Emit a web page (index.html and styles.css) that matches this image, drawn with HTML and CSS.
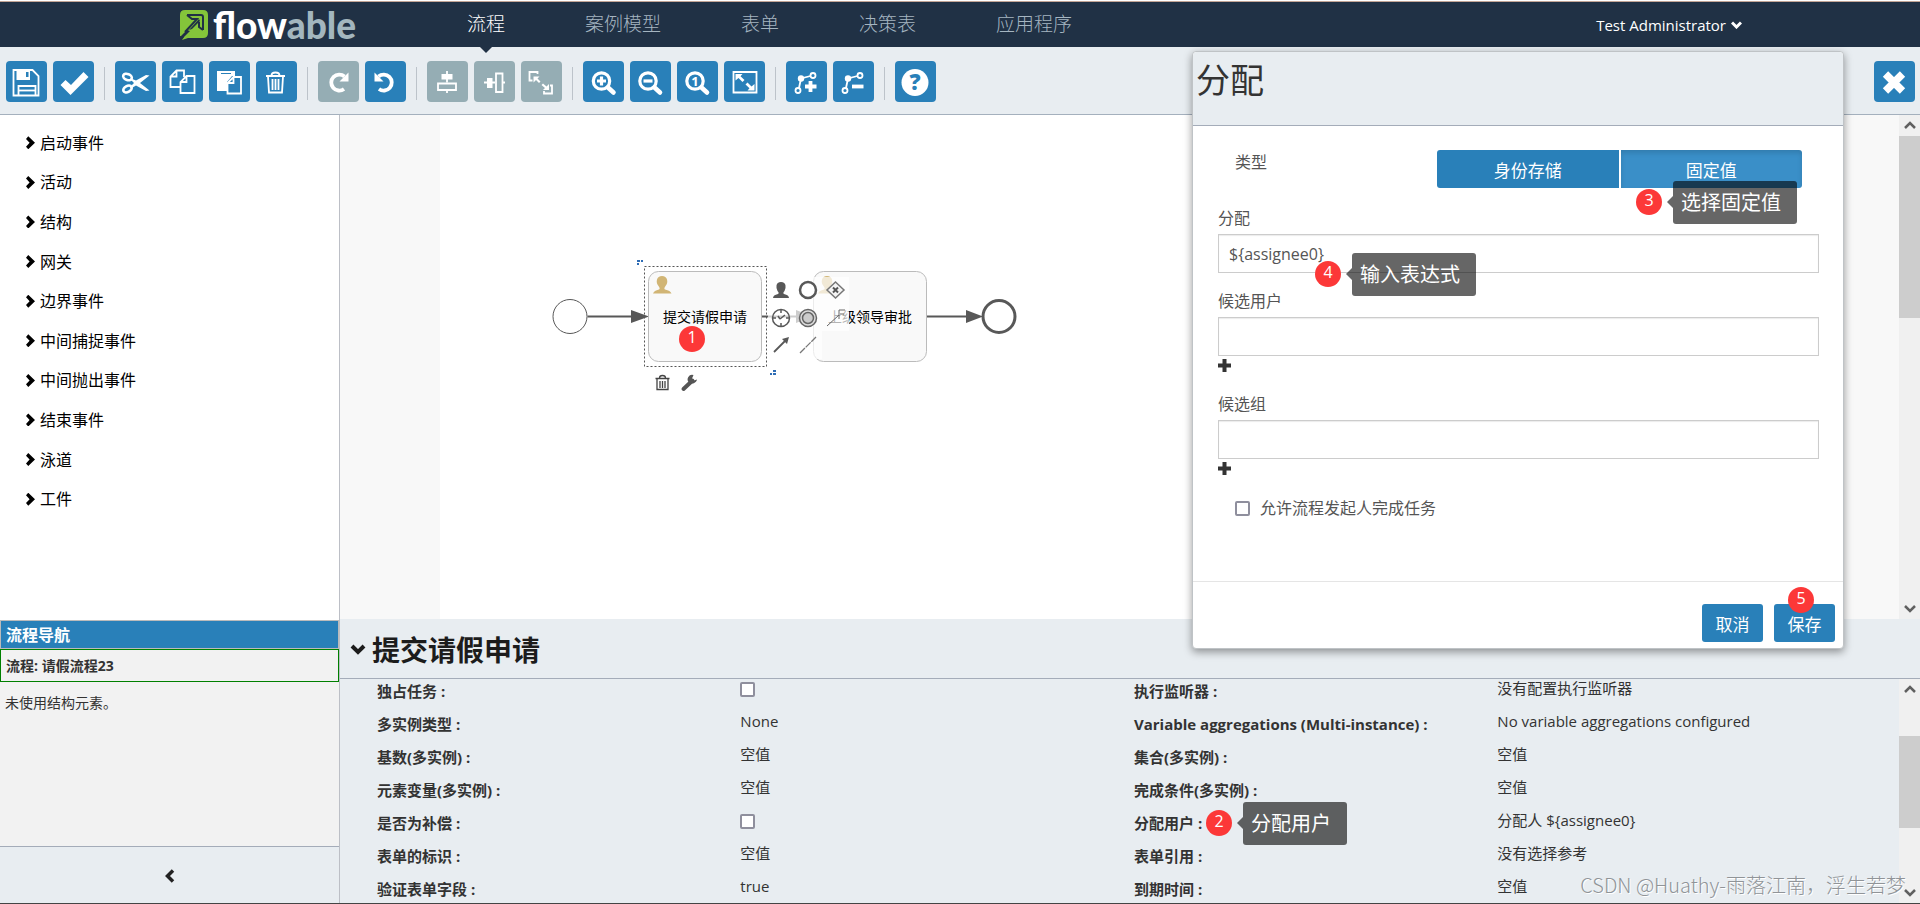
FILE: index.html
```html
<!DOCTYPE html>
<html lang="zh-CN">
<head>
<meta charset="utf-8">
<title>Flowable Modeler</title>
<link rel="stylesheet" href="styles.css">
</head>
<body>
<header class="navbar">
  <a class="logo" href="#" aria-label="flowable">
    <svg class="logo-mark" viewBox="0 0 29 30">
      <path d="M5 0h18q5 0 5 5v18q0 5-5 5H8L2 30l2-3L0 26V5q0-5 5-5z" fill="#84c53a"/>
      <path d="M7 5h14q2 0 2 2v13M7 5l5 4h5L5 22M23 20l-4-3v-5" fill="none" stroke="#203145" stroke-width="2"/>
      <path d="M19 9L9 20l3-1 8-8z" fill="#203145"/>
      <path d="M0 27L7 20l3 1-7 7z" fill="#203145"/>
    </svg>
    <span class="logo-text">flow<span class="logo-dim">able</span></span>
  </a>
  <nav class="menu">
    <a class="menu-item active" href="#">流程</a>
    <a class="menu-item" href="#">案例模型</a>
    <a class="menu-item" href="#">表单</a>
    <a class="menu-item" href="#">决策表</a>
    <a class="menu-item" href="#">应用程序</a>
  </nav>
  <button class="user" type="button">Test Administrator
    <svg width="11" height="8" viewBox="0 0 11 8"><path d="M1 1.500l4.500 4.500 4.500-4.500" fill="none" stroke="#fff" stroke-width="3"/></svg>
  </button>
</header>

<div class="toolbar">
  <button class="tool" type="button" aria-label="保存"><svg viewBox="0 0 41 41"><path d="M7.500 9h19l6 6v19.500h-25z" class="s"/><path d="M10.500 9h13.500v10h-13.500z" class="f"/><path d="M20 11h2.500v5h-2.500z" class="b"/><path d="M12.500 34v-9h17v9" class="s"/><path d="M13 29.500h16" class="s"/></svg></button>
  <button class="tool" type="button" aria-label="验证"><svg viewBox="0 0 41 41"><path d="M7.500 24l5-5 5.500 5L30.500 11l5 5L17.500 34z" class="f"/></svg></button>
  <span class="sep"></span>
  <button class="tool" type="button" aria-label="剪切"><svg viewBox="0 0 41 41"><ellipse cx="12.500" cy="16" rx="4.500" ry="3" transform="rotate(22 12.500 16)" class="s2"/><ellipse cx="12.500" cy="28" rx="4.500" ry="3" transform="rotate(-28 12.500 28)" class="s2"/><path d="M16 17.500l5 2L31 14l3.500.5-9.500 7.500 9.500 7.500-3.500.5-10-5.500-5 3-1-1.500 4-4-4-4z" class="f"/></svg></button>
  <button class="tool" type="button" aria-label="复制"><svg viewBox="0 0 41 41"><path d="M18 26H8.500V15.500l6-6H22V16M14.500 9.500v6h-6" class="s"/><path d="M24.500 15H32.500v17H18.500V21zM24.500 15v6h-6" class="s"/></svg></button>
  <button class="tool" type="button" aria-label="粘贴"><svg viewBox="0 0 41 41"><path d="M8 10h18v5h-3l-5 6v9H8z" class="f"/><path d="M12 12.500h10" class="bs"/><path d="M24.500 16H32v16.500H18.500V22zM24.500 16v6h-6" class="s"/></svg></button>
  <button class="tool" type="button" aria-label="删除"><svg viewBox="0 0 41 41"><path d="M10 15h19M15.500 14.500q0-3 4-3t4 3M12 15.500l1 16h13l1-16M16.500 18v11M19.500 18v11M22.500 18v11" class="s"/></svg></button>
  <span class="sep"></span>
  <button class="tool" type="button" aria-label="重做" disabled><svg viewBox="0 0 41 41"><path d="M26.500 15.500A8 8 0 1 0 26 28" class="s4"/><path d="M30.500 11.500v9h-9z" class="f"/></svg></button>
  <button class="tool" type="button" aria-label="撤销"><svg viewBox="0 0 41 41"><path d="M13.500 15.500A8 8 0 1 1 14 28" class="s4"/><path d="M9.500 11.500v9h9z" class="f"/></svg></button>
  <span class="sep"></span>
  <button class="tool" type="button" aria-label="垂直对齐" disabled><svg viewBox="0 0 41 41"><path d="M20 10v11.500M20 29v3" class="s"/><path d="M14.500 13h11v5.500h-11z" class="f"/><path d="M11 22.500h18v6.500H11z" class="s"/></svg></button>
  <button class="tool" type="button" aria-label="水平对齐" disabled><svg viewBox="0 0 41 41"><path d="M10 21.500h11M29 21.500h2" class="s"/><path d="M13 17h5.500v10h-5.500z" class="f"/><path d="M22 12.500h6.500v18.500H22z" class="s"/></svg></button>
  <button class="tool" type="button" aria-label="相同大小" disabled><svg viewBox="0 0 41 41"><path d="M16.500 13v-2H8.500v8.500h3M31 26v6.500h-8V30M29 24.500h2v3" class="s"/><path d="M12.500 15.500h6l-2 2 3 3-1.500 1.500-3-3-2.500 2.500z" class="f"/><path d="M28 29h-6l2-2-3.500-3 1.500-1.500 3.500 3 2.500-2.500z" class="f"/></svg></button>
  <span class="sep"></span>
  <button class="tool" type="button" aria-label="放大"><svg viewBox="0 0 41 41"><circle cx="18.500" cy="20" r="8.200" class="s3"/><path d="M25 26.500l5.500 5" class="s5"/><path d="M18.500 15.500v9M14 20h9" class="s3"/></svg></button>
  <button class="tool" type="button" aria-label="缩小"><svg viewBox="0 0 41 41"><circle cx="18" cy="20" r="8.200" class="s3"/><path d="M24.500 26.500l5.500 5" class="s5"/><path d="M13.500 20h9" class="s3"/></svg></button>
  <button class="tool" type="button" aria-label="实际大小"><svg viewBox="0 0 41 41"><circle cx="18" cy="20" r="8.200" class="s3"/><path d="M24.500 26.500l5.500 5" class="s5"/><text x="18" y="25" class="one">1</text></svg></button>
  <button class="tool" type="button" aria-label="适合窗口"><svg viewBox="0 0 41 41"><path d="M9.500 11h23v20.500h-23z" class="s"/><path d="M11.500 13h7l-2 2.300 4 3.700-2 2-4-4-3 2.500zM30.500 29.500h-7l2-2.300-4-3.700 2-2 4 4 3-2.500z" class="f"/></svg></button>
  <span class="sep"></span>
  <button class="tool" type="button" aria-label="添加折点"><svg viewBox="0 0 41 41"><circle cx="12" cy="29.500" r="2.500" class="s"/><circle cx="15" cy="17.500" r="3.200" class="f"/><circle cx="27" cy="14.500" r="2.500" class="s"/><path d="M13 27l2-9.500 9.500-2.500" class="s"/><path d="M24.500 20v11M19 25.500h11.500" class="s4"/></svg></button>
  <button class="tool" type="button" aria-label="删除折点"><svg viewBox="0 0 41 41"><circle cx="12" cy="29.500" r="2.500" class="s"/><circle cx="15" cy="17.500" r="3.200" class="f"/><circle cx="27" cy="14.500" r="2.500" class="s"/><path d="M13 27l2-9.500 9.500-2.500" class="s"/><path d="M19 25.500h11.500" class="s4"/></svg></button>
  <span class="sep"></span>
  <button class="tool" type="button" aria-label="帮助"><svg viewBox="0 0 41 41"><circle cx="20" cy="21.500" r="13.500" class="f"/><text x="20" y="29" class="ask">?</text></svg></button>
  <button class="tool close" type="button" aria-label="关闭"><svg viewBox="0 0 41 41"><path d="M11.500 13L28.500 30M28.500 13L11.500 30" stroke="#fff" stroke-width="7.500"/></svg></button>
</div>

<main class="main">
  <aside class="side">
    <ul class="palette">
      <li><button type="button">启动事件</button></li>
      <li><button type="button">活动</button></li>
      <li><button type="button">结构</button></li>
      <li><button type="button">网关</button></li>
      <li><button type="button">边界事件</button></li>
      <li><button type="button">中间捕捉事件</button></li>
      <li><button type="button">中间抛出事件</button></li>
      <li><button type="button">结束事件</button></li>
      <li><button type="button">泳道</button></li>
      <li><button type="button">工件</button></li>
    </ul>
    <section class="navigator">
      <h2 class="navigator-head">流程导航</h2>
      <p class="navigator-current">流程: 请假流程23</p>
      <p class="navigator-note">未使用结构元素。</p>
    </section>
    <button class="collapse" type="button" aria-label="收起">
      <svg width="10" height="14" viewBox="0 0 10 14"><path d="M8 1.500L2.500 7 8 12.500" fill="none" stroke="#222" stroke-width="3.500"/></svg>
    </button>
  </aside>

  <section class="work">
    <div class="canvas-row">
      <div class="canvas">
        <div class="paper">
          <svg class="diagram" width="500" height="170" viewBox="0 0 500 170">
            <g fill="none" stroke="#585858">
              <circle cx="30" cy="76.500" r="17" fill="#fff" stroke-width="1"/>
              <path d="M47.500 76.500H92M387 76.500h40M222 76.500h35" stroke-width="2"/>
            </g>
            <path d="M91 70l18 6.500-18 6.500zM426 70l17 6.500-17 6.500zM256 70l17 6.500-17 6.500z" fill="#585858"/>
            <circle cx="459" cy="76.500" r="16" fill="#fff" stroke="#585858" stroke-width="3"/>
            <rect x="108.500" y="31.500" width="113" height="90" rx="10" fill="#f9f9f9" stroke="#bbb"/>
            <rect x="273.500" y="31.500" width="113" height="90" rx="10" fill="#f9f9f9" stroke="#bbb"/>
            <rect x="104.500" y="26.500" width="122" height="100" fill="none" stroke="#555" stroke-dasharray="2 2"/>
            <g fill="#d1b575">
              <path d="M113 53.500q1-3 6-4 1.500-1-.5-3.500-2.500-3-1.500-6.500 1-3.500 5-3.500t5 3.500q1 3.500-1.500 6.500-2 2.500-.5 3.500 5.500 1 6.500 4z"/>
              <path d="M278 53.500q1-3 6-4 1.500-1-.5-3.500-2.500-3-1.500-6.500 1-3.500 5-3.500t5 3.500q1 3.500-1.500 6.500-2 2.500-.5 3.500 5.500 1 6.500 4z"/>
            </g>
            <text x="165" y="82" class="task-text">提交请假申请</text>
            <text x="330" y="82" class="task-text">上级领导审批</text>
            <path d="M228 37h81v54h-27v28h-54z" fill="#fff" fill-opacity=".7"/>
            <g fill="#2f6db5"><path d="M97 20h3v2h-3zM101 20h2v2h-2zM97 23h2v2h-2zM233 130h3v2h-3zM230 133h2v2h-2zM233 133h3v2h-3z"/></g>
            <path d="M233 58q0-3 5-4 1.500-1-.5-3-1.500-3-1-5.500.5-3.500 4.500-3.500t4.500 3.500q.5 2.500-1 5.500-2 2-.5 3 5 1 5 4z" fill="#585858"/>
            <circle cx="268" cy="50" r="8" fill="#fff" stroke="#585858" stroke-width="2.500"/>
            <path d="M295.500 42l8.500 8-8.500 8-8.500-8z" fill="#f4f4f4" stroke="#777" stroke-width="1.500"/>
            <path d="M293 47.500l5 5M298 47.500l-5 5" stroke="#555" stroke-width="2"/>
            <circle cx="241" cy="78" r="8.500" fill="none" stroke="#585858" stroke-width="1.500"/>
            <path d="M241 70v3M241 83v3M233 78h3M246 78h3M240 79l5-4M240 79l-2-3" stroke="#585858" stroke-width="1.500"/>
            <circle cx="268" cy="78" r="8.500" fill="#ddd" stroke="#666" stroke-width="1.500"/>
            <circle cx="268" cy="78" r="5.500" fill="#ccc" stroke="#666" stroke-width="1.500"/>
            <path d="M287 86l12-11M299 79v-9h6M300 74h4" fill="none" stroke="#666"/>
            <path d="M234 112l11-11" stroke="#585858" stroke-width="1.800"/>
            <path d="M249 97l-2 7-5-5z" fill="#585858"/>
            <path d="M260 113l16-16" stroke="#777" stroke-width="1.300" stroke-dasharray="7 1"/>
            <path d="M115.500 138.500h14M119.500 138q0-2.500 3-2.500t3 2.500M117 139v10.500h11V139M120 141v7M122.500 141v7M125 141v7" fill="none" stroke="#444" stroke-width="1.300"/>
            <path d="M143.500 149l9-8.500" stroke="#555" stroke-width="4" stroke-linecap="round"/>
            <path d="M157 139.500a5 5 0 0 1-8 3 4.500 4.500 0 0 1 4.500-7.500l-1.500 3.500 2 2z" fill="#555"/>
          </svg>
          <span class="pin pin-1">1</span>
        </div>
      </div>
      <div class="scroll scroll-canvas">
        <svg class="up" width="12" height="9" viewBox="0 0 12 9"><path d="M1 7l5-5 5 5" fill="none" stroke="#606060" stroke-width="2.500"/></svg>
        <span class="thumb"></span>
        <svg class="down" width="12" height="9" viewBox="0 0 12 9"><path d="M1 2l5 5 5-5" fill="none" stroke="#606060" stroke-width="2.500"/></svg>
      </div>
    </div>

    <div class="props">
      <h1 class="props-title">
        <svg width="16" height="12" viewBox="0 0 16 12"><path d="M2 3l6 6 6-6" fill="none" stroke="#1c1c1c" stroke-width="4"/></svg>
        提交请假申请
      </h1>
      <div class="props-body">
        <div class="props-view">
          <table class="props-table">
            <tr><th scope="row"><label for="exclusive">独占任务 :</label></th><td><input class="check" type="checkbox" id="exclusive"></td><th scope="row">执行监听器 :</th><td>没有配置执行监听器</td></tr>
            <tr><th scope="row">多实例类型 :</th><td>None</td><th scope="row">Variable aggregations (Multi-instance) :</th><td>No variable aggregations configured</td></tr>
            <tr><th scope="row">基数(多实例) :</th><td>空值</td><th scope="row">集合(多实例) :</th><td>空值</td></tr>
            <tr><th scope="row">元素变量(多实例) :</th><td>空值</td><th scope="row">完成条件(多实例) :</th><td>空值</td></tr>
            <tr><th scope="row"><label for="compensation">是否为补偿 :</label></th><td><input class="check" type="checkbox" id="compensation"></td><th scope="row" class="pinned">分配用户 :<span class="pin pin-2">2</span><span class="tip tip-2">分配用户</span></th><td>分配人 ${assignee0}</td></tr>
            <tr><th scope="row">表单的标识 :</th><td>空值</td><th scope="row">表单引用 :</th><td>没有选择参考</td></tr>
            <tr><th scope="row">验证表单字段 :</th><td>true</td><th scope="row">到期时间 :</th><td>空值</td></tr>
          </table>
        </div>
        <div class="scroll scroll-props">
          <svg class="up" width="12" height="9" viewBox="0 0 12 9"><path d="M1 7l5-5 5 5" fill="none" stroke="#606060" stroke-width="2.500"/></svg>
          <span class="thumb"></span>
          <svg class="down" width="12" height="9" viewBox="0 0 12 9"><path d="M1 2l5 5 5-5" fill="none" stroke="#606060" stroke-width="2.500"/></svg>
        </div>
      </div>
    </div>
  </section>
</main>

<form class="dialog">
  <h2 class="dialog-title">分配</h2>
  <div class="dialog-body">
    <div class="type-row">
      <span class="type-label">类型</span>
      <div class="segmented">
        <button class="segment" type="button">身份存储</button>
        <button class="segment selected" type="button">固定值</button>
      </div>
      <span class="pin pin-3">3</span><span class="tip tip-3">选择固定值</span>
    </div>
    <div class="field">
      <label for="assignee">分配</label>
      <input class="text" id="assignee" type="text" value="${assignee0}">
      <span class="pin pin-4">4</span><span class="tip tip-4">输入表达式</span>
    </div>
    <div class="field">
      <label for="users">候选用户</label>
      <input class="text" id="users" type="text">
      <button class="plus" type="button" aria-label="添加候选用户"><svg width="13" height="13" viewBox="0 0 13 13"><path d="M6.500 0v13M0 6.500h13" stroke="#333" stroke-width="4"/></svg></button>
    </div>
    <div class="field">
      <label for="groups">候选组</label>
      <input class="text" id="groups" type="text">
      <button class="plus" type="button" aria-label="添加候选组"><svg width="13" height="13" viewBox="0 0 13 13"><path d="M6.500 0v13M0 6.500h13" stroke="#333" stroke-width="4"/></svg></button>
    </div>
    <label class="allow"><input class="check" type="checkbox">允许流程发起人完成任务</label>
  </div>
  <div class="dialog-foot">
    <button class="btn" type="button">取消</button>
    <button class="btn" type="button">保存</button>
    <span class="pin pin-5">5</span>
  </div>
</form>
<span class="watermark">CSDN @Huathy-雨落江南，浮生若梦</span>
</body>
</html>
```

FILE: styles.css
```css
* { box-sizing: border-box; }

body {
  margin: 0;
  height: 100vh;
  display: flex;
  flex-direction: column;
  overflow: hidden;
  position: relative;
  border-bottom: 1px solid #444;
  font-family: "Open Sans", "Noto Sans CJK SC", sans-serif;
  font-size: 15px;
  color: #333;
  background: #e8edf1;
}

button, input { font-family: inherit; margin: 0; }
button { border: 0; padding: 0; background: none; color: inherit; }
h1, h2, p, ul { margin: 0; padding: 0; }

/* top bar */
.navbar {
  flex: none;
  height: 47px;
  border-top: 1px solid #fff;
  box-shadow: inset 0 1px 0 #c3a596;
  background: #203145;
  display: flex;
  align-items: center;
  padding: 1px 0 0 180px;
}
.logo { display: flex; width: 247px; gap: 4px; align-items: center; text-decoration: none; }
.logo-mark { width: 29px; height: 30px; }
.logo-text { font: 900 37px/40px Lato, sans-serif; color: #fff; }
.logo-dim { color: #a3b6be; }
.menu { display: flex; align-self: stretch; }
.menu-item {
  position: relative;
  padding: 0 40px;
  font-size: 19px;
  line-height: 45px;
  color: #a5b5c1;
  font-weight: 300;
  text-decoration: none;
}
.menu-item.active { color: #fff; }
.menu-item.active::after {
  content: "";
  position: absolute;
  left: 50%;
  top: 100%;
  margin-left: -6px;
  border: 6px solid transparent;
  border-top-color: #203145;
  border-bottom: 0;
}
.user { margin-left: auto; margin-right: 178px; color: #fff; font-size: 15px; display: flex; gap: 5px; align-items: center; }

/* toolbar */
.toolbar {
  flex: none;
  height: 68px;
  display: flex;
  align-items: flex-start;
  gap: 6px;
  padding: 14px 5px 0 6px;
  border-bottom: 1px solid #a4b0bd;
}
.tool { width: 41px; height: 41px; border-radius: 4px; background: #2980b9; }
.tool svg { display: block; width: 41px; height: 41px; }
.tool:disabled { background: #95adb4; }
.tool.close { margin-left: auto; }
.sep { width: 1px; height: 33px; margin: 6px 4px 0; background: #bcc3ca; }
.f { fill: #fff; }
.b { fill: #2980b9; }
.s, .s2, .s3, .s4, .s5, .bs { fill: none; stroke: #fff; stroke-width: 1.8; }
.s2 { stroke-width: 2.6; }
.s3 { stroke-width: 3.2; }
.s4 { stroke-width: 3.8; }
.s5 { stroke-width: 4.6; stroke-linecap: round; }
.bs { stroke: #2980b9; stroke-width: 1; }
.one, .ask { font: 700 13px "Open Sans", sans-serif; fill: #fff; text-anchor: middle; }
.ask { font-size: 22px; fill: #2980b9; font-weight: 800; }

/* layout */
.main { flex: 1; min-height: 0; display: grid; grid-template-columns: 340px 1fr; }
.side { display: flex; flex-direction: column; min-height: 0; border-right: 1px solid #bcbfc6; background: #fff; }
.palette {
  flex: 1;
  display: grid;
  grid-auto-rows: 1fr;
  align-items: center;
  list-style: none;
  padding: 8px 0 101px 26px;
}
.palette button { display: flex; align-items: center; gap: 5px; font-size: 16px; line-height: 24px; color: #000; }
.palette button::before {
  content: "";
  width: 9px;
  height: 13px;
  background: #000;
  clip-path: polygon(0 20%, 25% 0, 100% 50%, 25% 100%, 0 80%, 40% 50%);
}
.navigator { flex: none; height: 226px; background: #f2f2f2; }
.navigator-head {
  height: 29px;
  padding-left: 5px;
  border: 1px solid #bbb;
  background: #2980b9;
  color: #fff;
  font-size: 16px;
  line-height: 28px;
}
.navigator-current { height: 33px; padding-left: 5px; border: 1px solid #008000; font-size: 14px; line-height: 31px; font-weight: 700; }
.navigator-note { padding: 10px 5px; font-size: 14px; line-height: 22px; }
.collapse { flex: none; height: 57px; padding-top: 6px; background: #e8edf1; border-top: 1px solid #a4acb9; }

/* canvas */
.work { min-width: 0; display: flex; flex-direction: column; min-height: 0; }
.canvas-row { flex: 1; display: flex; min-height: 0; }
.canvas { flex: 1; padding: 0 100px; background: #f8f8f8; }
.paper { position: relative; height: 100%; background: #fff; }
.diagram { position: absolute; left: 100px; top: 125px; }
.task-text { font: 14px "Open Sans", "Noto Sans CJK SC", sans-serif; text-anchor: middle; fill: #000; }

/* scroll bars */
.scroll { flex: none; width: 21px; display: flex; flex-direction: column; align-items: center; background: #f0f0f0; padding: 6px 0; }
.thumb { width: 100%; background: #cdcdcd; }
.down { margin-top: auto; }
.scroll-canvas .thumb { height: 182px; margin-top: 6px; }
.scroll-props .thumb { height: 92px; margin-top: 42px; }

/* properties */
.props { flex: none; height: 284px; display: flex; flex-direction: column; }
.props-title {
  flex: none;
  height: 60px;
  display: flex;
  align-items: center;
  gap: 6px;
  padding-left: 10px;
  border-bottom: 1px solid #a4acb9;
  font-size: 28px;
  color: #1c1c1c;
}
.props-body { flex: 1; display: flex; min-height: 0; }
.props-view { flex: 1; overflow: hidden; padding: 0 8px 0 37px; }
.props-table { width: 100%; table-layout: fixed; border-collapse: collapse; }
.props-table th, .props-table td { height: 33px; padding: 0; text-align: left; vertical-align: top; white-space: nowrap; }
.props-table th { width: 24%; line-height: 24px; }
.props-table td { width: 26%; line-height: 18px; }
.pinned { position: relative; }

.check {
  appearance: none;
  display: block;
  width: 15px;
  height: 15px;
  border: 2px solid #8f8f9d;
  border-radius: 2px;
  background: #fff;
}
.props-table .check { margin-top: 3px; }

/* dialog */
.dialog {
  position: absolute;
  top: 51px;
  right: 76px;
  width: 652px;
  border: 1px solid #bfc3c6;
  border-radius: 4px;
  background: #fff;
  box-shadow: 0 3px 9px rgba(0, 0, 0, .4);
}
.dialog-title {
  height: 74px;
  padding: 4px 3px 0;
  border-radius: 4px 4px 0 0;
  border-bottom: 1px solid #a4acb9;
  background: #e8edf1;
  font-size: 34px;
  line-height: 48px;
  font-weight: 400;
}
.dialog-body { height: 455px; padding: 24px 24px 0 25px; font-size: 16px; color: #555; }
.type-row, .field, .dialog-foot { position: relative; }
.type-row { display: flex; height: 56px; padding: 0 17px; justify-content: space-between; }
.type-label { line-height: 24px; }
.segmented { display: flex; gap: 2px; width: 365px; height: 38px; }
.segment { flex: 1; background: #2980b9; color: #fff; font-size: 17px; border-radius: 3px 0 0 3px; }
.segment.selected { background: #3a8fc8; border-radius: 0 3px 3px 0; box-shadow: inset 0 3px 5px rgba(0, 0, 0, .13); }
.field { display: flex; flex-direction: column; align-items: flex-start; }
.field label { line-height: 24px; margin-bottom: 4px; }
.text {
  width: 100%;
  height: 39px;
  margin-bottom: 16px;
  padding: 0 10px;
  border: 1px solid #ccc;
  box-shadow: inset 0 1px 1px rgba(0, 0, 0, .08);
  font-size: 16px;
  color: #555;
}
.plus { height: 13px; margin: -13px 0 20px; display: flex; }
.allow { display: flex; align-items: center; gap: 10px; padding: 1px 17px; line-height: 24px; }
.dialog-foot { display: flex; justify-content: flex-end; gap: 11px; padding: 22px 8px 6px; border-top: 1px solid #e5e5e5; }
.btn { width: 61px; height: 38px; border-radius: 3px; background: #2980b9; color: #fff; font-size: 17px; }

/* step markers and hints */
.pin {
  position: absolute;
  width: 26px;
  height: 26px;
  border-radius: 50%;
  background: #fc3838;
  color: #fff;
  font-size: 16px;
  font-weight: 400;
  line-height: 23px;
  text-align: center;
}
.tip {
  position: absolute;
  height: 43px;
  padding: 0 16px 0 8px;
  border-radius: 3px;
  background: rgba(0, 0, 0, .6);
  color: #fff;
  font-size: 20px;
  font-weight: 400;
  line-height: 43px;
  white-space: nowrap;
}
.tip::before {
  content: "";
  position: absolute;
  right: 100%;
  top: 15px;
  border: 6px solid transparent;
  border-right-color: rgba(0, 0, 0, .6);
  border-left: 0;
}
.pin-1 { left: 239px; top: 211px; }
.pin-2 { left: 72px; top: -1px; }
.tip-2 { left: 109px; top: -9px; }
.pin-3 { right: 157px; top: 39px; }
.tip-3 { right: 22px; top: 31px; }
.pin-4 { left: 97px; top: 55px; }
.tip-4 { left: 134px; top: 47px; }
.pin-5 { right: 29px; top: 5px; }

.watermark {
  position: absolute;
  right: 14px;
  bottom: 4px;
  font-family: "Noto Sans CJK SC", sans-serif;
  font-size: 20px;
  font-weight: 300;
  line-height: 28px;
  color: #909498;
  text-shadow: 1px 1px 0 #fff;
}
```
